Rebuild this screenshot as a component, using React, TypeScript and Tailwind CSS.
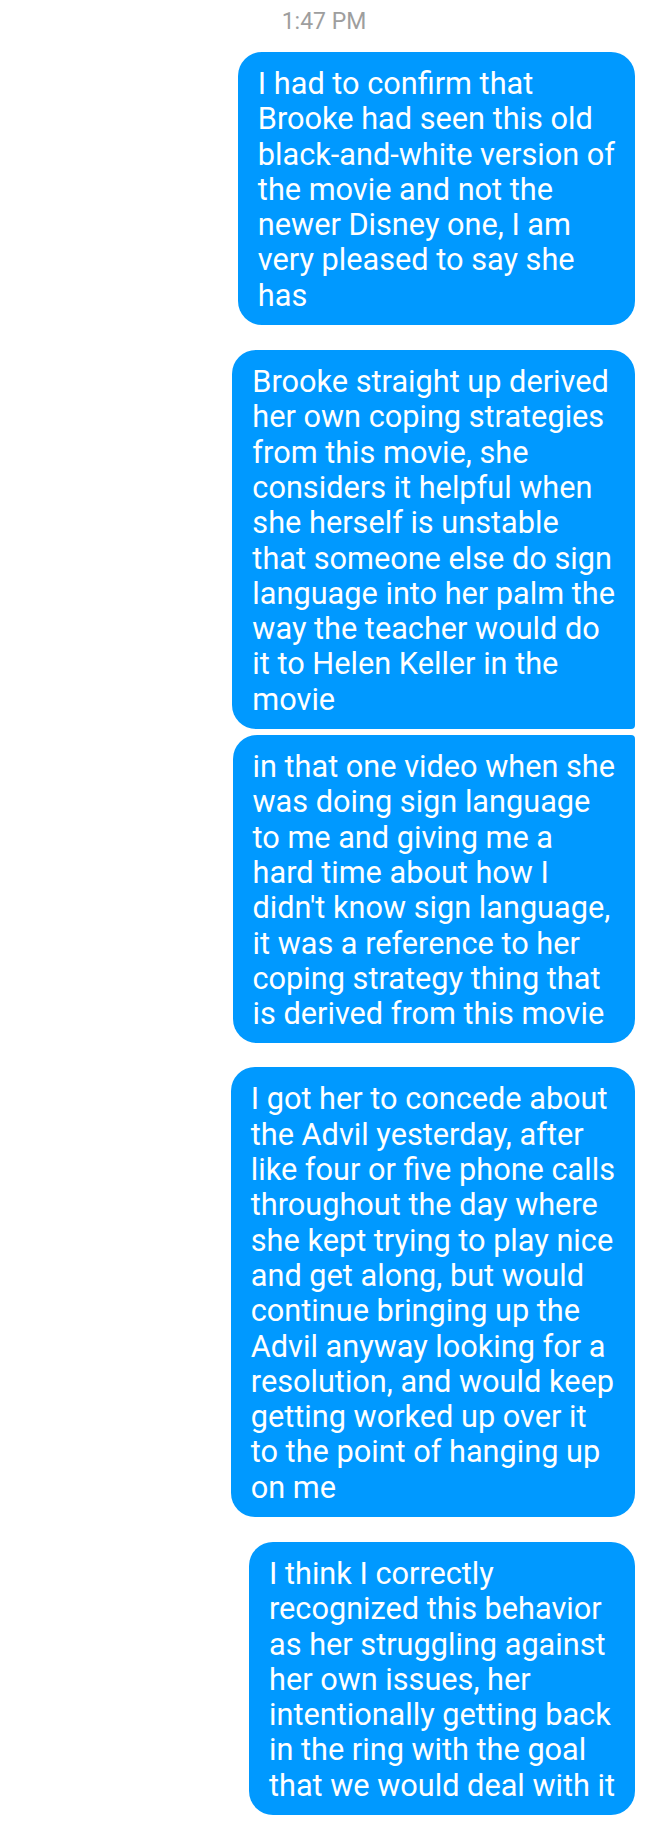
import React from "react";

const messages: { lines: string[]; corners: string; mt: string }[] = [
  {
    lines: [
      "I had to confirm that",
      "Brooke had seen this old",
      "black-and-white version of",
      "the movie and not the",
      "newer Disney one, I am",
      "very pleased to say she",
      "has",
    ],
    corners: "rounded-[24px]",
    mt: "mt-0",
  },
  {
    lines: [
      "Brooke straight up derived",
      "her own coping strategies",
      "from this movie, she",
      "considers it helpful when",
      "she herself is unstable",
      "that someone else do sign",
      "language into her palm the",
      "way the teacher would do",
      "it to Helen Keller in the",
      "movie",
    ],
    corners: "rounded-[24px] rounded-br-[4px]",
    mt: "mt-[25px]",
  },
  {
    lines: [
      "in that one video when she",
      "was doing sign language",
      "to me and giving me a",
      "hard time about how I",
      "didn't know sign language,",
      "it was a reference to her",
      "coping strategy thing that",
      "is derived from this movie",
    ],
    corners: "rounded-[24px] rounded-tr-[4px]",
    mt: "mt-[6px]",
  },
  {
    lines: [
      "I got her to concede about",
      "the Advil yesterday, after",
      "like four or five phone calls",
      "throughout the day where",
      "she kept trying to play nice",
      "and get along, but would",
      "continue bringing up the",
      "Advil anyway looking for a",
      "resolution, and would keep",
      "getting worked up over it",
      "to the point of hanging up",
      "on me",
    ],
    corners: "rounded-[24px]",
    mt: "mt-[24px]",
  },
  {
    lines: [
      "I think I correctly",
      "recognized this behavior",
      "as her struggling against",
      "her own issues, her",
      "intentionally getting back",
      "in the ring with the goal",
      "that we would deal with it",
    ],
    corners: "rounded-[24px]",
    mt: "mt-[25px]",
  },
];

export default function App() {
  return (
    <div
      className="w-[648px] min-h-[1830px] bg-white pb-[15px]"
      style={{ fontFamily: "Roboto, 'Noto Sans', sans-serif" }}
    >
      <div className="flex justify-center pt-[8px] pb-[17px]">
        <span className="text-[23px] leading-[27px] text-[#9e9e9e]">1:47 PM</span>
      </div>
      <div className="flex flex-col items-end pr-[13px]">
        {messages.map((m, i) => (
          <div
            key={i}
            className={`${m.mt} ${m.corners} bg-[#0099ff] px-[20px] pt-[14px] pb-[12px] text-white text-[30.7px] leading-[35.3px]`}
          >
            {m.lines.map((l, j) => (
              <div key={j} className="whitespace-nowrap">
                {l}
              </div>
            ))}
          </div>
        ))}
      </div>
    </div>
  );
}
